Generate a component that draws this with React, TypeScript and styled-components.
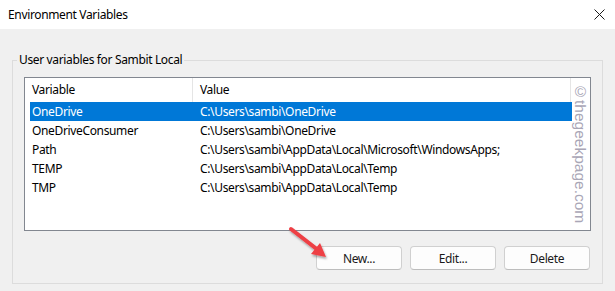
import styled, { createGlobalStyle } from "styled-components";

const GlobalStyle = createGlobalStyle`
  html, body {
    margin: 0;
    padding: 0;
    background: #f0f0f0;
  }
  body {
    font-family: "Noto Sans", "Liberation Sans", sans-serif;
    font-size: 12px;
    letter-spacing: -0.35px;
    color: #000;
  }
`;

const Window = styled.div`
  position: relative;
  width: 615px;
  height: 291px;
  overflow: hidden;
  background: #f0f0f0;
`;

const TitleBar = styled.div`
  height: 29px;
  background: #fff;
  display: flex;
  align-items: center;
  justify-content: space-between;
  padding: 0 8px 1px 8px;
  box-sizing: border-box;
`;

const Title = styled.span`
  font-size: 12px;
  color: #000;
`;

const CloseBtn = styled.span`
  display: flex;
  align-items: center;
  justify-content: center;
  width: 14px;
  height: 14px;
  margin-right: 1px;
`;

const Body = styled.div`
  padding: 23px 12px 0 12px;
`;

const Group = styled.fieldset`
  margin: 0;
  padding: 0 11px 13px 11px;
  border: 1px solid #dcdcdc;
  height: 232px;
  box-sizing: border-box;
`;

const Legend = styled.legend`
  margin-left: -7px;
  padding: 0 2px;
  line-height: 16px;
  font-size: 12px;
`;

const ListBox = styled.div`
  position: relative;
  margin-top: 9px;
  height: 154px;
  box-sizing: border-box;
  border: 1px solid #828790;
  background: #fff;
`;

const Header = styled.div`
  display: grid;
  grid-template-columns: 168px 378px 1fr;
  height: 24px;
`;

const HeadCell = styled.div`
  padding-left: 7px;
  line-height: 24px;
  border-right: 1px solid #e5e5e5;
  &:last-child {
    border-right: none;
  }
`;

const Row = styled.div<{ $selected?: boolean }>`
  display: grid;
  grid-template-columns: 168px 1fr;
  margin-left: 5px;
  width: 542px;
  height: 19px;
  line-height: 19px;
  padding-left: 2px;
  box-sizing: border-box;
  background: ${(p) => (p.$selected ? "#0078d7" : "transparent")};
  color: ${(p) => (p.$selected ? "#fff" : "#000")};
  white-space: nowrap;
`;

const Watermark = styled.div`
  position: absolute;
  right: 1px;
  top: 5px;
  writing-mode: vertical-rl;
  font-family: "Liberation Sans", Arial, sans-serif;
  font-size: 15.5px;
  letter-spacing: 0;
  color: #a9a6b6;
`;

const Buttons = styled.div`
  display: flex;
  justify-content: flex-end;
  gap: 8px;
  margin-top: 15px;
  padding-right: 1px;
`;

const Button = styled.button`
  width: 86px;
  height: 24px;
  border: 1px solid #d0d0d0;
  border-bottom-color: #bdbdbd;
  border-radius: 4px;
  background: #fdfdfd;
  font-family: inherit;
  font-size: 12px;
  letter-spacing: inherit;
  color: #1a1a1a;
  padding: 0;
`;

const Arrow = styled.svg`
  position: absolute;
  left: 280px;
  top: 220px;
`;

const rows = [
  { name: "OneDrive", value: "C:\\Users\\sambi\\OneDrive" },
  { name: "OneDriveConsumer", value: "C:\\Users\\sambi\\OneDrive" },
  { name: "Path", value: "C:\\Users\\sambi\\AppData\\Local\\Microsoft\\WindowsApps;" },
  { name: "TEMP", value: "C:\\Users\\sambi\\AppData\\Local\\Temp" },
  { name: "TMP", value: "C:\\Users\\sambi\\AppData\\Local\\Temp" },
];

export default function App() {
  return (
    <Window>
      <GlobalStyle />
      <TitleBar>
        <Title>Environment Variables</Title>
        <CloseBtn>
          <svg width="11" height="11" viewBox="0 0 11 11">
            <path d="M0.5 0.5 L10.5 10.5 M10.5 0.5 L0.5 10.5" stroke="#1a1a1a" strokeWidth="1" />
          </svg>
        </CloseBtn>
      </TitleBar>
      <Body>
        <Group>
          <Legend>User variables for Sambit Local</Legend>
          <ListBox>
            <Header>
              <HeadCell>Variable</HeadCell>
              <HeadCell>Value</HeadCell>
              <HeadCell />
            </Header>
            {rows.map((r, i) => (
              <Row key={r.name} $selected={i === 0}>
                <span>{r.name}</span>
                <span>{r.value}</span>
              </Row>
            ))}
            <Watermark>©thegeekpage.com</Watermark>
          </ListBox>
          <Buttons>
            <Button>New...</Button>
            <Button>Edit...</Button>
            <Button>Delete</Button>
          </Buttons>
        </Group>
      </Body>
      <Arrow width="60" height="50" viewBox="0 0 60 50">
        <defs>
          <filter id="sh" x="-20%" y="-20%" width="150%" height="150%">
            <feDropShadow dx="1" dy="2" stdDeviation="1.2" floodColor="#000" floodOpacity="0.35" />
          </filter>
        </defs>
        <g filter="url(#sh)">
          <line x1="11" y1="9" x2="38" y2="30" stroke="#ee3f45" strokeWidth="4" strokeLinecap="round" />
          <polygon points="46,37 31,34 40,23" fill="#ee3f45" />
        </g>
      </Arrow>
    </Window>
  );
}
